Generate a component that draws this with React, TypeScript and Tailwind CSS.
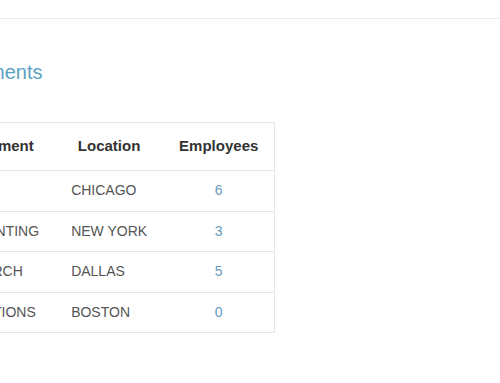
import React from "react";

type Dept = { name: string; location: string; employees: number };

const departments: Dept[] = [
  { name: "SALES", location: "CHICAGO", employees: 6 },
  { name: "ACCOUNTING", location: "NEW YORK", employees: 3 },
  { name: "RESEARCH", location: "DALLAS", employees: 5 },
  { name: "OPERATIONS", location: "BOSTON", employees: 0 },
];

export default function App() {
  return (
    <div
      className="min-h-[383px] w-[500px] overflow-hidden bg-white text-[#555]"
      style={{ fontFamily: '"Liberation Sans", Arial, sans-serif' }}
    >
      {/* top bar */}
      <div className="h-[19px] border-b border-[#ebebeb]" />

      <main className="-ml-[72px] pt-[41px]">
        <h2 className="text-[20px] leading-[24px] text-[#5ba2c2]">Departments</h2>

        <table className="mt-[38px] border-collapse border border-[#e6e6e6] text-[14px]">
          <thead>
            <tr className="h-[48px] border-b border-[#e6e6e6] text-[15px]">
              <th className="px-4 text-center font-bold text-[#333]">Department</th>
              <th className="px-4 text-center font-bold text-[#333]">Location</th>
              <th className="px-4 text-center font-bold text-[#333]">Employees</th>
            </tr>
          </thead>
          <tbody>
            {departments.map((d) => (
              <tr key={d.name} className="h-[40.5px] border-b border-[#e6e6e6]">
                <td className="px-4 text-left">{d.name}</td>
                <td className="px-4 text-left">{d.location}</td>
                <td className="px-4 text-center text-[#6a9ab8]">{d.employees}</td>
              </tr>
            ))}
          </tbody>
        </table>
      </main>
    </div>
  );
}
